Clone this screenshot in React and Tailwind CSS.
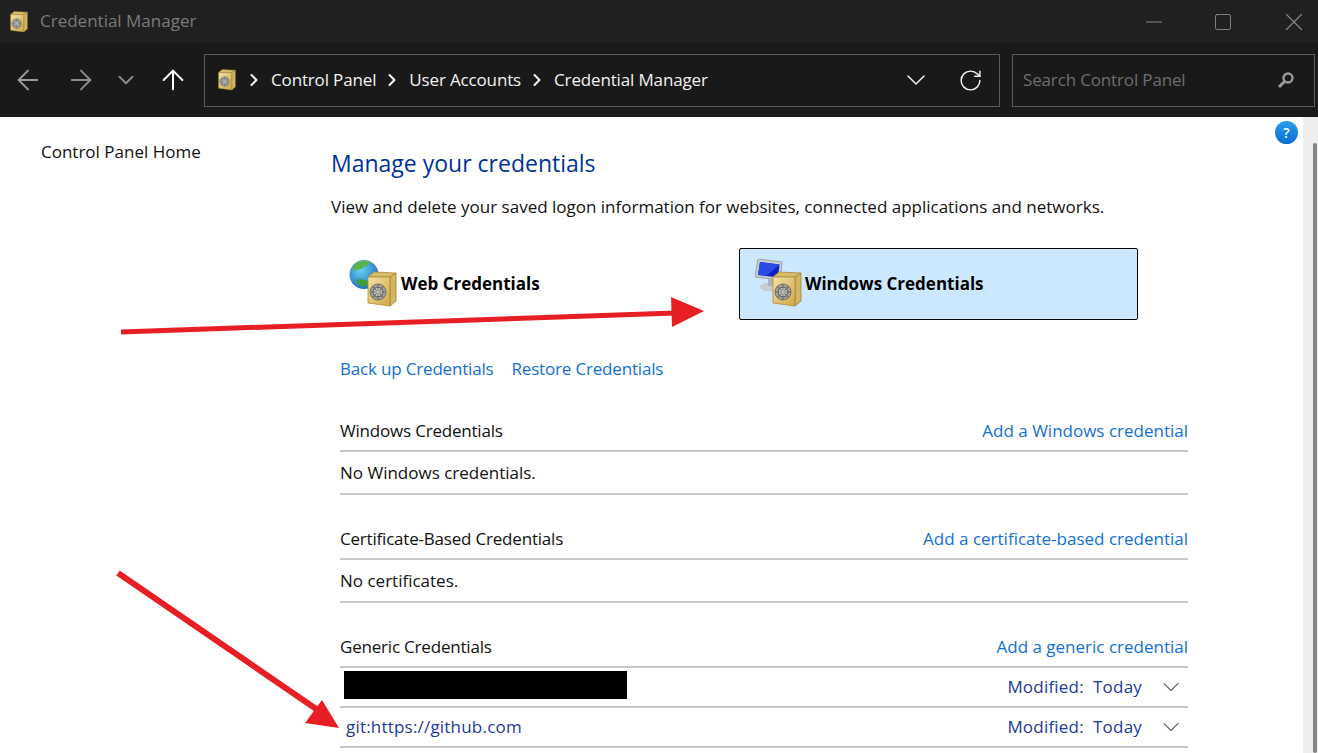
import { ArrowLeft, ArrowRight, ArrowUp, ChevronDown, ChevronRight, RotateCw, Minus, Square, X } from "lucide-react";

function Safe({ size = 20 }) {
  return (
    <svg width={size} height={size * 1.2} viewBox="0 0 30 36" className="shrink-0">
      <defs>
        <linearGradient id="safeFront" x1="0" y1="0" x2="1" y2="1">
          <stop offset="0" stopColor="#f3e3a6" />
          <stop offset="1" stopColor="#cfa744" />
        </linearGradient>
      </defs>
      <path d="M1 6 L7 1 L29 2 L23 6 Z" fill="#d9bd68" stroke="#a98a3c" strokeWidth="0.8" />
      <path d="M23 6 L29 2 L29 30 L23 35 Z" fill="#d4b562" stroke="#a07f30" strokeWidth="0.8" />
      <path d="M1 6 L23 6 L23 35 L1 32 Z" fill="url(#safeFront)" stroke="#a98a3c" strokeWidth="0.8" />
      <circle cx="11" cy="21" r="8" fill="#a5a39a" stroke="#77736a" />
      <circle cx="11" cy="21" r="4.8" fill="#dcdcd6" stroke="#6f6f69" strokeWidth="1.4" />
      <path d="M11 13 V29 M3 21 H19 M5.5 15.5 L16.5 26.5 M16.5 15.5 L5.5 26.5" stroke="#6f6f69" strokeWidth="1.1" />
      <circle cx="11" cy="21" r="2" fill="#b9b9b3" />
    </svg>
  );
}

function Globe() {
  return (
    <svg width="30" height="31" viewBox="0 0 30 31" className="absolute left-0 top-0">
      <defs>
        <radialGradient id="globeSea" cx="0.4" cy="0.35" r="0.8">
          <stop offset="0" stopColor="#6bd0f2" />
          <stop offset="1" stopColor="#0f5fb5" />
        </radialGradient>
      </defs>
      <circle cx="15" cy="15.5" r="14.5" fill="url(#globeSea)" />
      <path d="M6 5 C10 1 18 1 22 3 C20 7 16 6 14 9 C11 11 8 10 5 12 C3 9 4 7 6 5 Z" fill="#5db04a" />
      <path d="M7 21 C11 19 18 21 20 24 C17 29 10 29 7 21 Z" fill="#3f9c3c" />
    </svg>
  );
}

function Monitor() {
  return (
    <svg width="30" height="34" viewBox="0 0 30 34" className="absolute left-0 top-0">
      <path d="M3 0 L27 3 L25 21 L0 18 Z" fill="#c9ced6" stroke="#8c929c" strokeWidth="0.8" />
      <path d="M5 3 L24.5 5.5 L23 18.5 L3 16 Z" fill="#0b22c4" />
      <path d="M5 3 L24.5 5.5 L12 16.5 L3 16 Z" fill="#2a4be0" />
      <ellipse cx="16" cy="28" rx="11" ry="4.5" fill="#c9ccd0" />
      <rect x="13" y="20" width="6" height="7" fill="#aeb2b8" />
    </svg>
  );
}

function Section({ title, link, children }) {
  return (
    <div>
      <div className="h-[33px] flex items-start justify-between border-b-2 border-[#c8c8c8] leading-[24px]">
        <span className="text-[#111] tracking-[-0.2px]">{title}</span>
        <a className="text-[#1070d8]">{link}</a>
      </div>
      {children}
    </div>
  );
}

function CredRow({ children }) {
  return (
    <div className="h-[40px] flex items-center justify-between border-b-2 border-[#c8c8c8] text-[#1c3a9c]">
      {children}
      <div className="flex items-center">
        <span className="whitespace-pre tracking-[0.2px]">Modified:  Today</span>
        <ChevronDown size={28} strokeWidth={1} className="ml-[15px] mr-[3px] text-[#6e6e6e]" />
      </div>
    </div>
  );
}

export default function App() {
  return (
    <div
      className="relative w-[1318px] h-[753px] overflow-hidden bg-white text-[17px] flex flex-col"
      style={{ fontFamily: '"Open Sans", "Noto Sans", sans-serif' }}
    >
      {/* title bar */}
      <div className="h-[43px] bg-[#202020] flex items-center pl-[10px] text-[#7a7a7a]">
        <Safe size={18} />
        <span className="ml-[12px] mb-[2px]">Credential Manager</span>
        <div className="ml-auto flex items-center gap-[46px] pr-[9px] text-[#8a8a8a]">
          <Minus size={26} strokeWidth={0.9} />
          <Square size={20} strokeWidth={1.1} />
          <X size={30} strokeWidth={0.9} />
        </div>
      </div>

      {/* toolbar */}
      <div className="h-[74px] bg-[#191919] flex items-center pl-[12px]">
        <ArrowLeft size={32} strokeWidth={1.5} className="text-[#9a9a9a]" />
        <ArrowRight size={32} strokeWidth={1.5} className="ml-[21px] text-[#8a8a8a]" />
        <ChevronDown size={26} strokeWidth={1.8} className="ml-[16px] text-[#8a8a8a]" />
        <ArrowUp size={32} strokeWidth={1.5} className="ml-[18px] text-white" />
        <div className="ml-[15px] w-[796px] h-[53px] border border-[#5a5a5a] flex items-center pl-[13px] text-[#f2f2f2] tracking-[-0.15px]">
          <Safe size={18} />
          <ChevronRight size={20} strokeWidth={2.5} className="ml-[8px]" />
          <span className="ml-[7px]">Control Panel</span>
          <ChevronRight size={20} strokeWidth={2.5} className="ml-[6px]" />
          <span className="ml-[7px]">User Accounts</span>
          <ChevronRight size={20} strokeWidth={2.5} className="ml-[6px]" />
          <span className="ml-[7px]">Credential Manager</span>
          <ChevronDown size={32} strokeWidth={1.1} className="ml-auto" />
          <RotateCw size={25} strokeWidth={1.4} className="ml-[26px] mr-[16px]" />
        </div>
        <div className="ml-[12px] w-[303px] h-[53px] border border-[#5a5a5a] flex items-center px-[10px] text-[#6e6e6e]">
          <span className="tracking-[-0.15px]">Search Control Panel</span>
          <svg width="18" height="18" viewBox="0 0 18 18" className="ml-auto mr-[9px]">
            <circle cx="11" cy="7" r="4.5" fill="none" stroke="#9a9a9a" strokeWidth="2.4" />
            <path d="M7.5 10.5 L2 16" stroke="#9a9a9a" strokeWidth="3" />
          </svg>
        </div>
      </div>

      {/* content */}
      <div className="flex-1 flex min-h-0">
        <div className="w-[331px] pl-[41px] pt-[23px] shrink-0 text-[#111] leading-[24px]">Control Panel Home</div>

        <div className="flex-1 pt-[28px]">
          <h1 className="text-[23px] leading-[36px] text-[#003399] font-normal">Manage your credentials</h1>
          <p className="mt-[14px] leading-[24px] text-[#111]">
            View and delete your saved logon information for websites, connected applications and networks.
          </p>

          <div className="mt-[29px] flex">
            <div className="w-[408px] h-[72px] flex items-center pl-[18px]">
              <div className="relative w-[50px] h-[50px] shrink-0">
                <Globe />
                <div className="absolute left-[18px] top-[12px]">
                  <Safe size={30} />
                </div>
              </div>
              <span className="ml-[2px] font-bold text-black">Web Credentials</span>
            </div>
            <div className="w-[399px] h-[72px] border border-black rounded-[2px] bg-[#cce8ff] flex items-center pl-[15px]">
              <div className="relative w-[50px] h-[50px] shrink-0">
                <Monitor />
                <div className="absolute left-[17px] top-[12px]">
                  <Safe size={30} />
                </div>
              </div>
              <span className="font-bold text-black">Windows Credentials</span>
            </div>
          </div>

          <div className="ml-[9px] w-[848px]">
            <div className="mt-[37px] flex gap-[18px] leading-[24px] text-[#1070d8] tracking-[-0.18px]">
              <a>Back up Credentials</a>
              <a>Restore Credentials</a>
            </div>

            <div className="mt-[38px]">
              <Section title="Windows Credentials" link="Add a Windows credential">
                <div className="h-[43px] flex items-center border-b-2 border-[#c8c8c8] text-[#111]">No Windows credentials.</div>
              </Section>
            </div>
            <div className="mt-[32px]">
              <Section title="Certificate-Based Credentials" link="Add a certificate-based credential">
                <div className="h-[43px] flex items-center border-b-2 border-[#c8c8c8] text-[#111]">No certificates.</div>
              </Section>
            </div>
            <div className="mt-[32px]">
              <Section title="Generic Credentials" link="Add a generic credential">
                <CredRow>
                  <div className="ml-[4px] mb-[4px] w-[283px] h-[28px] bg-black" />
                </CredRow>
                <CredRow>
                  <span className="ml-[6px] tracking-[0.2px]">git:https://github.com</span>
                </CredRow>
              </Section>
            </div>
          </div>
        </div>

        {/* scrollbar */}
        <div className="w-[15px] shrink-0 bg-[#eeeeee] flex justify-end pt-[26px] pr-[1px]">
          <div className="w-[4px] h-[610px] bg-[#858585] rounded-[2px]" />
        </div>
      </div>

      {/* help button */}
      <div className="absolute left-[1275px] top-[121px] w-[23px] h-[23px] rounded-full bg-gradient-to-b from-[#2a9cf0] to-[#0a6fd0] flex items-center justify-center text-white text-[14px] font-semibold">
        ?
      </div>

      {/* red annotation arrows */}
      <svg width="1318" height="753" className="absolute left-0 top-0 pointer-events-none">
        <path d="M121 332 L675 313" stroke="#e81e25" strokeWidth="5" />
        <path d="M671 297 L704 311 L672 327 Z" fill="#e81e25" />
        <path d="M118 573 L325 715" stroke="#e81e25" strokeWidth="6" />
        <path d="M322 700 L339 728 L305 723 Z" fill="#e81e25" />
      </svg>
    </div>
  );
}
